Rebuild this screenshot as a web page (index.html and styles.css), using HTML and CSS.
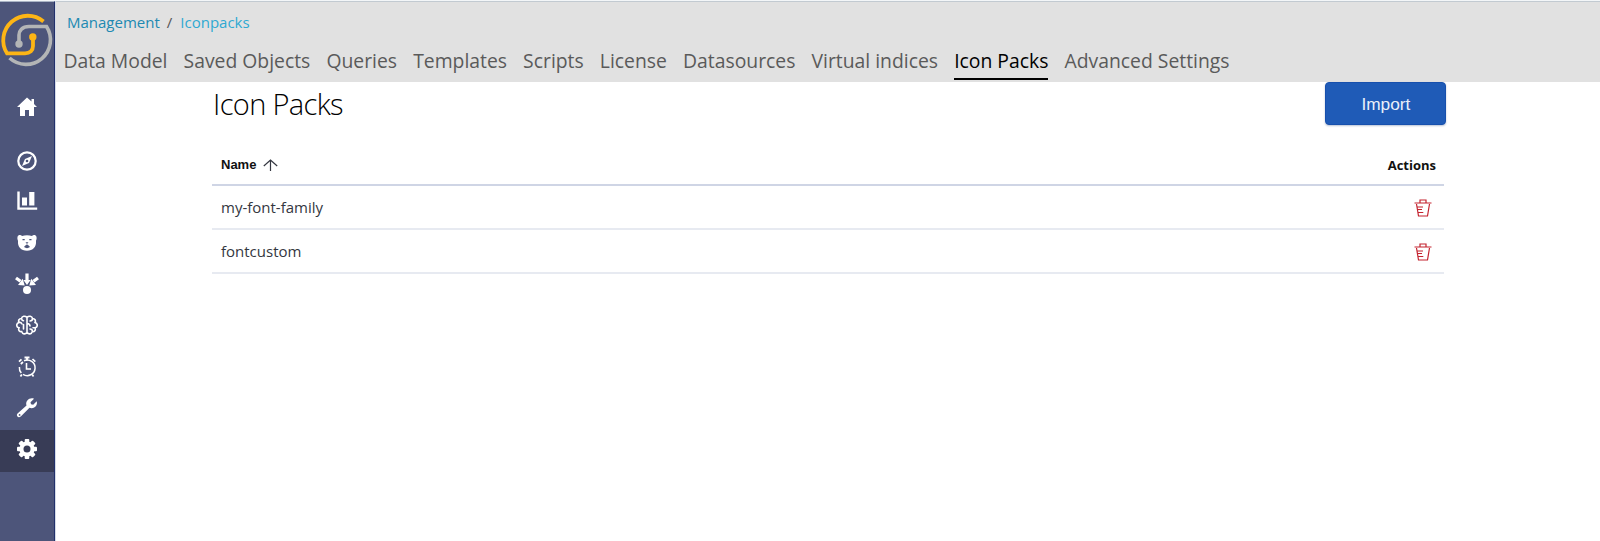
FILE: index.html
```
<!DOCTYPE html>
<html lang="en">
<head>
<meta charset="utf-8">
<title>Icon Packs</title>
<link rel="stylesheet" href="styles.css">
</head>
<body>
<div class="app">
  <aside class="sidebar">
    <svg class="logo" viewBox="0 0 54 54" fill="none">
      <path d="M43.500 8.500A24.500 24.500 0 0 0 7 40.300H25C30 40.300 33 37.500 33 33V24" stroke="#fdb515" stroke-width="3.800"/>
      <circle cx="32.800" cy="24" r="3.700" fill="#fdb515"/>
      <path d="M9.500 45A24.500 24.500 0 0 0 46.500 13.500H29C22 13.500 19 18 19 22V30" stroke="#b3b5b6" stroke-width="3.600"/>
      <circle cx="19" cy="31" r="3.700" fill="#b3b5b6"/>
    </svg>
    <nav class="apps">
      <a class="app-link home"><svg viewBox="0 0 22 22"><path d="M11 1.500L1 11h3v9h5v-6h4v6h5v-9h3l-3-3V3h-2.500v2.500z" fill="#fff"/></svg></a>
      <a class="app-link"><svg viewBox="0 0 22 22"><circle cx="11" cy="11" r="8.700" fill="none" stroke="#fff" stroke-width="2.200"/><path d="M16 6L13 13L6 16L9 9z" fill="#fff"/><circle cx="11" cy="11" r="1.300" fill="#4d557a"/></svg></a>
      <a class="app-link chart"><svg viewBox="0 0 22 22"><path d="M1.300 1.500h2.400v16h17.500v2.300H1.300zM6 7.500h5v8H6zM13.200 2h5.200v13.500h-5.200z" fill="#fff"/></svg></a>
      <a class="app-link"><svg viewBox="0 0 22 22"><path d="M1.500 5C2 2.500 5 2.500 6 4C9 3 13 3 16 4C17 2.500 20 2.500 20.500 5C21 7 20 8 20 9C20.500 15 17 18.700 11 18.700S1.500 15 2 9C2 8 1 7 1.500 5z" fill="#fff"/><path d="M6.500 7.700h2.200M13.300 7.700h2.200" stroke="#4d557a" stroke-width="1.200"/><path d="M9.500 10.300h3l-1.500 1.800zM11 12.300c.5 1 2 1 3 2.700q-3 2.300-6 0c1-1.700 2.500-1.700 3-2.700" fill="#4d557a"/></svg></a>
      <a class="app-link arrows"><svg viewBox="0 0 24 22"><path d="M12 .5v7M1 5L5.500 8.300M23 5L18.500 8.300" stroke="#fff" stroke-width="3.200"/><path d="M8.400 7h7.200L12 11.900zM3 12L7.700 5.700L9.700 12.600zM21 12L16.300 5.700L14.300 12.600z" fill="#fff"/><circle cx="12" cy="17" r="4" fill="#fff"/></svg></a>
      <a class="app-link brain"><svg viewBox="0 0 22 22" fill="none" stroke="#fff" stroke-width="1.600" stroke-linecap="round"><path d="M11 3.500C9 1.500 6 2 5.500 4.500C3 4.500 2 6.500 3 8.500C0 9.500 0 13 3 13.800C2 16 3.500 18 5.700 17.600C6.500 20.500 9.500 20.500 11 18.500C12.500 20.500 15.500 20.500 16.300 17.600C18.500 18 20 16 19 13.800C22 13 22 9.500 19 8.500C20 6.500 19 4.500 16.500 4.500C16 2 13 1.500 11 3.500V18.500M5.500 4.500Q5.700 6.500 7.500 6.700M3 8.500Q5 8 6 10M7.500 10.500V15M16.500 4.500Q16.500 7 14 7M11 9.500Q14 9.700 14 12M16.300 17.600Q16.500 15 14 15M19 13.800H17"/></svg></a>
      <a class="app-link"><svg viewBox="0 0 22 22" fill="none" stroke="#fff"><path d="M8.500 1.500h5M11 1.500v3" stroke-width="1.900"/><path d="M8 4.700A7.800 7.800 0 1 1 7 18.300M5.300 17A7.800 7.800 0 0 1 3.400 11" stroke-width="1.500"/><path d="M10.500 7v6h4.500" stroke-width="1.600"/><path d="M3 5.700L5.500 3.300M4.800 8L7 6M16.500 3L19.300 5.700M5.800 18.500L4.500 20.500M16.200 18.500L17.500 20.500" stroke-width="1.700"/></svg></a>
      <a class="app-link"><svg viewBox="0 0 22 22"><path d="M18 1.700L14.500 5.200L15 7.300L17.200 7.800L20.700 4.200C22 8 18.500 12.500 13.500 10.800L5 19.300C3.800 20.500 2 20.500 1.500 19.500C.6 18.500 .7 17.300 1.800 16.300L10.500 8.500C9 4 13.500.2 18 1.700z" fill="#fff"/><circle cx="3.600" cy="17.900" r=".9" fill="#4d557a"/></svg></a>
      <a class="app-link active"><svg viewBox="0 0 22 22"><g fill="#fff"><rect x="8.700" y="1" width="4.600" height="20" rx="1"/><rect x="8.700" y="1" width="4.600" height="20" rx="1" transform="rotate(45 11 11)"/><rect x="8.700" y="1" width="4.600" height="20" rx="1" transform="rotate(90 11 11)"/><rect x="8.700" y="1" width="4.600" height="20" rx="1" transform="rotate(135 11 11)"/><circle cx="11" cy="11" r="7.600"/></g><circle cx="11" cy="11" r="3.500" fill="#383c56"/></svg></a>
    </nav>
  </aside>
  <div class="content">
    <header class="topbar">
      <div class="breadcrumb"><a class="crumb">Management</a><span class="slash">/</span><a class="crumb current">Iconpacks</a></div>
      <nav class="tabs">
        <a>Data Model</a><a>Saved Objects</a><a>Queries</a><a>Templates</a><a>Scripts</a><a>License</a><a>Datasources</a><a>Virtual indices</a><a class="selected">Icon Packs</a><a>Advanced Settings</a>
      </nav>
    </header>
    <main class="page">
      <div class="heading"><h1>Icon Packs</h1><button class="import">Import</button></div>
      <div class="table">
        <div class="row head"><span class="sort">Name<svg viewBox="0 0 15 12" fill="none" stroke="#343741" stroke-width="1.200"><path d="M.8 7L7.500 1L14.200 7M7.500 1v11"/></svg></span><span class="actions">Actions</span></div>
        <div class="row"><span>my-font-family</span><svg class="trash" viewBox="0 0 18 18" fill="none" stroke="#c4232f" stroke-width="1.200"><path d="M.5 4h17M6 4V1h6V4M2.500 5l2 12h9L15.500 5M3.500 8h5.500M4 10.500h4M4.300 13.500h5"/></svg></div>
        <div class="row"><span>fontcustom</span><svg class="trash" viewBox="0 0 18 18" fill="none" stroke="#c4232f" stroke-width="1.200"><path d="M.5 4h17M6 4V1h6V4M2.500 5l2 12h9L15.500 5M3.500 8h5.500M4 10.500h4M4.300 13.500h5"/></svg></div>
      </div>
    </main>
  </div>
</div>
</body>
</html>
```
FILE: styles.css
```
* { box-sizing: border-box; }
body { margin: 0; background: #fff; font-family: "Open Sans", sans-serif; }
.app { display: flex; height: 541px; overflow: hidden; border-top: 1px solid #f3f6f8; }
.sidebar { width: 55px; flex: none; background: #4d557a; border-right: 1px solid #22306b; border-top: 1px solid #aab4c5; }
.logo { display: block; width: 54px; height: 54px; margin-top: 11px; }
.apps { display: flex; flex-direction: column; padding-top: 20.500px; }
.app-link { display: flex; justify-content: center; width: 54px; height: 41.300px; padding-top: 8.500px; flex: none; }
.app-link svg { width: 22px; height: 22px; }
.app-link.home { height: 53.500px; padding-top: 8px; }
.app-link.chart, .app-link.brain { padding-top: 7.700px; }
.app-link.arrows svg { width: 24px; }
.app-link.active { background: #383c56; height: 42px; padding-top: 8px; }
.content { flex: 1; border-left: 1px solid #d5dbe7; }
.topbar { height: 81px; background: #e1e1e1; border-top: 1px solid #c2cad1; }
.breadcrumb { display: flex; padding: 9px 0 0 11px; font-size: 15px; line-height: 22px; }
.crumb { color: #2089b2; }
.crumb.current { color: #2fa9d2; }
.slash { color: #555; margin: 0 8px 0 7px; }
.tabs { display: flex; gap: 16.100px; margin: 11px 0 0 7.400px; font-size: 19.350px; line-height: 33px; color: #5a5a5a; white-space: nowrap; }
.tabs a { height: 36px; }
.tabs .selected { color: #000; border-bottom: 2px solid #000; }
.page { width: 1235px; margin-left: 156px; }
.heading { display: flex; justify-content: space-between; height: 62px; width: 1234.400px; }
h1 { margin: 1px 0 0 1px; font-size: 29px; line-height: 42px; font-weight: 300; color: #000; letter-spacing: -.65px; }
.import { width: 121px; height: 43px; padding: 2px 0 0; border: 1px solid #1750ad; border-radius: 4px; background: #1f5bb7; color: #e9effa; font: 17.300px "Liberation Sans", sans-serif; box-shadow: 0 1px 2px #b8c2d5; }
.table { width: 1232px; }
.row { display: flex; align-items: center; justify-content: space-between; height: 44px; padding: 0 9px; border-bottom: 2px solid #e7eaf1; font-size: 15px; color: #343741; }
.head { height: 42px; border-bottom-color: #cfd5e5; color: #111; font-size: 13px; font-weight: 700; padding: 1px 8px 0 9px; }
.sort { display: flex; align-items: center; gap: 6.500px; font-family: "Liberation Sans", sans-serif; }
.sort svg { width: 15px; height: 12px; }
.trash { width: 18px; height: 18px; margin: 1px 3.500px 0 0; }
```
